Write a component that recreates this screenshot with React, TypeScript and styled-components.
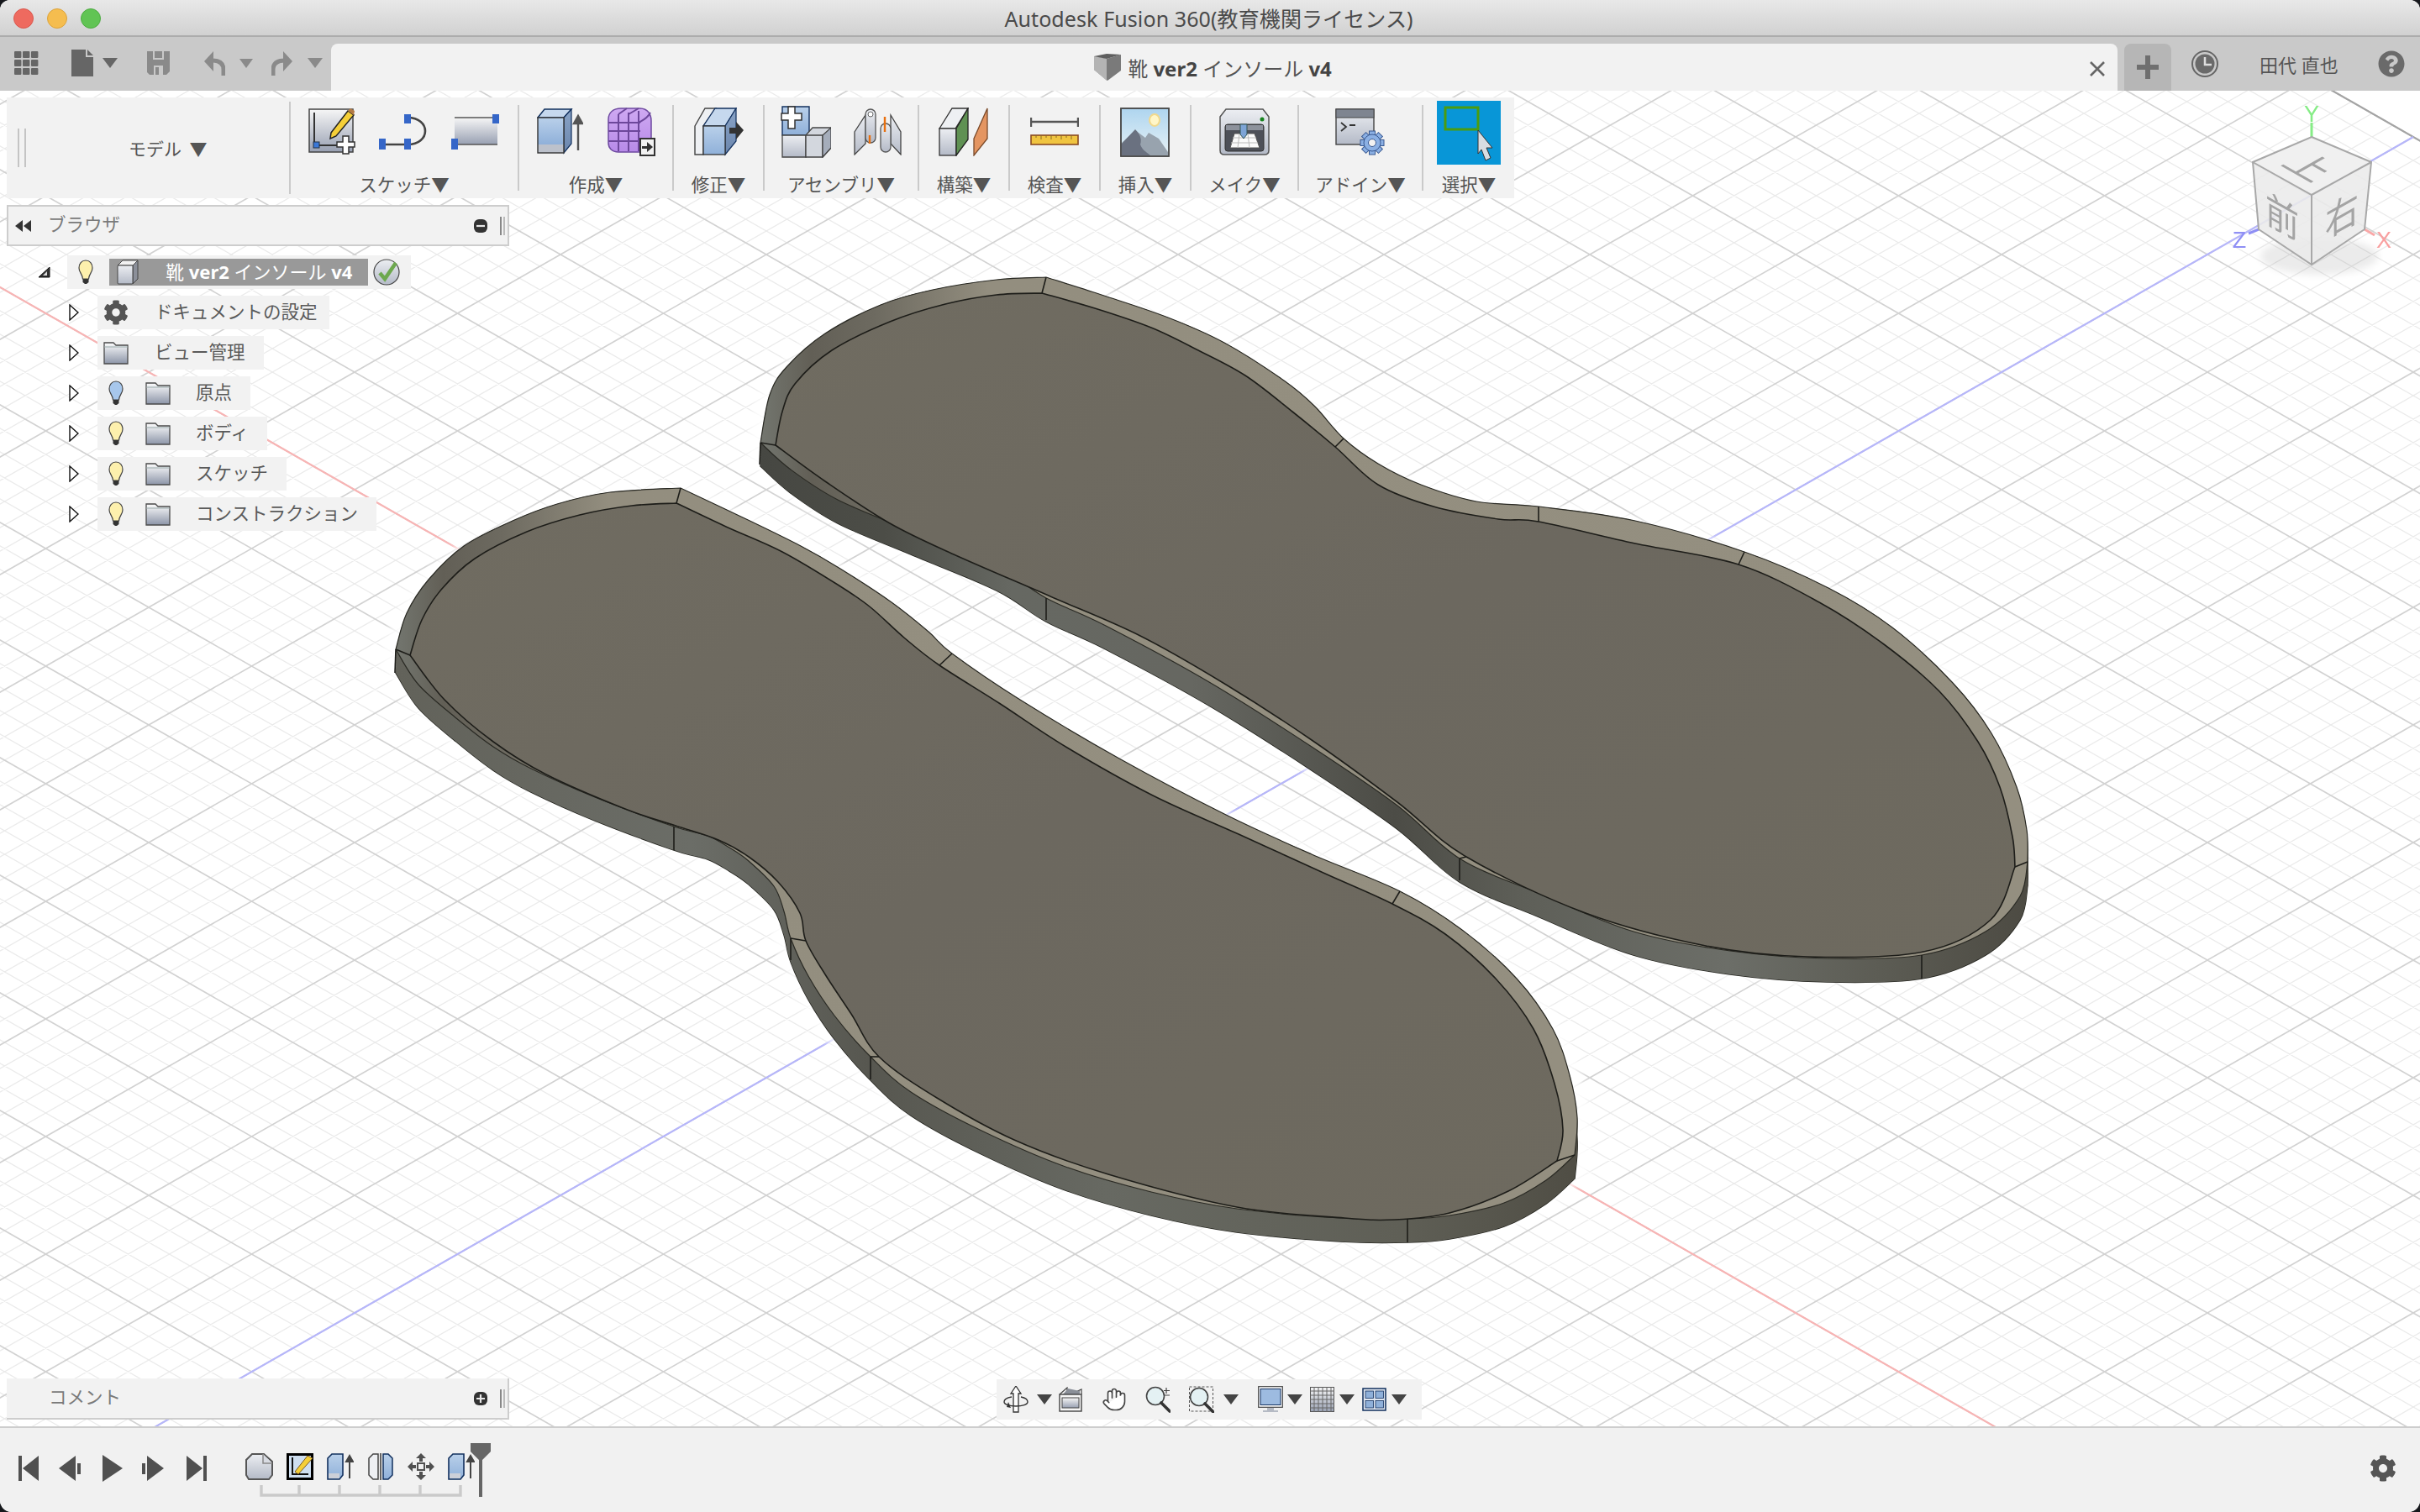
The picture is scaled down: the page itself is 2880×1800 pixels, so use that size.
import React from 'react';
import styled, { createGlobalStyle } from 'styled-components';
import { Hand } from 'lucide-react';
import { FaCog, FaQuestionCircle } from 'react-icons/fa';

const FONT = `"Noto Sans", "Noto Sans CJK JP", sans-serif`;

const Global = createGlobalStyle`
  html, body { margin: 0; padding: 0; background: #16181c; }
  #root { width: 2880px; height: 1800px; overflow: hidden; }
  * { box-sizing: border-box; }
`;

const Win = styled.div`
  width: 2880px; height: 1800px; display: flex; flex-direction: column;
  border-radius: 12px 12px 14px 14px; overflow: hidden; background: #fff;
  font-family: ${FONT}; color: #555;
`;
const TitleBar = styled.div`
  height: 44px; flex: none; display: grid; grid-template-columns: 1fr auto 1fr; align-items: center;
  background: linear-gradient(#e8e8e8, #d1d1d1); border-bottom: 2px solid #acacac;
`;
const Lights = styled.div`display: flex; gap: 16px; padding-left: 16px;`;
const Light = styled.span<{ $c: string; $b: string }>`
  width: 24px; height: 24px; border-radius: 50%; background: ${p => p.$c}; border: 1px solid ${p => p.$b};
`;
const WinTitle = styled.div`font-size: 25px; line-height: 44px; color: #4a4a4a; white-space: nowrap; letter-spacing: .1px; margin-left: -3px;`;

const TabBar = styled.div`
  height: 64px; flex: none; display: flex; background: #c9c9c9;
`;
const LeftTools = styled.div`width: 394px; flex: none; display: flex; align-items: center; height: 62px; padding-top: 0;`;
const Tab = styled.div`
  width: 2126px; flex: none; margin-top: 8px; height: 56px; background: #f2f2f2; border-radius: 8px 8px 0 0;
  display: flex; align-items: center; justify-content: center; position: relative; font-size: 24px; color: #555; gap: 8px; padding-right: 28px;
  b { font-weight: 700; color: #444; }
`;
const TabClose = styled.svg`position: absolute; right: 14px; top: 20px;`;
const PlusTab = styled.div`
  width: 56px; flex: none; margin: 8px 0 0 8px; height: 56px; background: #b6b6b6; border-radius: 8px 8px 0 0;
  display: flex; align-items: center; justify-content: center;
`;
const RightTools = styled.div`flex: 1; display: flex; align-items: center; height: 64px; padding-bottom: 0;`;
const UserName = styled.div`font-size: 22px; color: #555; margin-left: 49px; white-space: nowrap;`;

const Viewport = styled.div`flex: 1; position: relative; background: #fff; min-height: 0;`;
const Canvas = styled.svg`position: absolute; inset: 0; display: block;`;
const Overlay = styled.div`
  position: absolute; inset: 0; display: flex; flex-direction: column; padding: 8px 0 8px 8px;
`;

const Toolbar = styled.div`
  width: 1794px; height: 120px; flex: none; background: #f2f2f2; display: flex; align-items: flex-start; padding-top: 9px;
`;
const ModelSection = styled.div`
  width: 336px; flex: none; height: 102px; display: flex; align-items: center;
`;
const Grip = styled.div`
  width: 10px; height: 46px; border-left: 2px solid #c4c4c4; border-right: 2px solid #c4c4c4; margin-left: 13px; flex: none;
`;
const ModelLabel = styled.div`font-size: 21px; margin-left: 122px; color: #555; white-space: nowrap; word-spacing: 4px;`;
const ToolGroup = styled.div<{ $w: number; $tall?: boolean }>`
  width: ${p => p.$w}px; flex: none; height: ${p => p.$tall ? 110 : 102}px;
  margin-top: ${p => p.$tall ? -4 : 0}px; padding-top: ${p => p.$tall ? 4 : 0}px;
  border-left: 2px solid #cacaca; display: flex; flex-direction: column; align-items: center;
`;
const ToolIcons = styled.div<{ $gap?: number }>`
  display: flex; height: 58px; margin-top: 3px; align-items: center; gap: ${p => p.$gap ?? 0}px; flex: none;
`;
const ToolLabel = styled.div`font-size: 21.5px; line-height: 30px; margin-top: 19px; color: #555; white-space: nowrap; flex: none;`;
const SelectBox = styled.div`
  width: 76px; height: 76px; background: #0896d7; flex: none; margin-top: 1px; display: flex;
`;

const PanelBar = styled.div<{ $open?: boolean }>`
  width: 598px; height: 49px; flex: none; background: #f2f2f2; display: flex; align-items: center;
  border-bottom: 2px solid #cdcdcd; border-right: 2px solid #cdcdcd;
  ${p => p.$open ? 'border-top: 2px solid #cdcdcd; border-left: 2px solid #cdcdcd;' : ''}
  margin-top: ${p => p.$open ? 8 : 0}px;
`;
const PanelTitle = styled.div<{ $open?: boolean }>`
  font-size: 21.5px; color: #7a7a7a; margin-left: ${p => p.$open ? 19 : 50}px; flex: 1; line-height: 1; margin-top: -4px;
`;
const PanelGrip = styled.div`
  width: 6px; height: 22px; border-left: 2px solid #888; border-right: 2px solid #bbb; margin: 0 3px 0 15px; flex: none;
`;

const Tree = styled.div`display: flex; flex-direction: column; gap: 8px; margin-top: 11px;`;
const TreeRow = styled.div<{ $root?: boolean }>`
  display: flex; align-items: center; height: 40px; padding-left: ${p => p.$root ? 37 : 74}px;
`;
const Pill = styled.div<{ $root?: boolean; $tight?: boolean }>`
  height: 40px; background: #f2f2f2; display: flex; align-items: center; flex: none;
  margin-left: ${p => p.$root ? 20 : 22}px; padding-right: ${p => p.$root ? 13 : p.$tight ? 14 : 22}px;
`;
const BulbSlot = styled.div<{ $root?: boolean }>`
  width: 18px; flex: none; margin-left: 13px; margin-right: ${p => p.$root ? 19 : 26}px; display: flex;
`;
const FolderSlot = styled.div<{ $flat?: boolean }>`
  width: 30px; flex: none; margin-left: ${p => p.$flat ? 7 : 0}px; margin-right: ${p => p.$flat ? 31 : 30}px; display: flex;
`;
const RowText = styled.div`font-size: 21.5px; color: #5a5a5a; white-space: nowrap; line-height: 40px; margin-top: -3px;`;
const Selected = styled.div`
  width: 308px; height: 32px; background: #999; color: #fff; display: flex; align-items: center; padding-left: 9px; flex: none;
  font-size: 22px; line-height: 30px; white-space: nowrap; margin-right: 6px;
  b { font-weight: 700; }
  span { margin-left: 32px; margin-top: -3px; }
`;

const Footer = styled.div`margin-top: auto; display: flex; align-items: flex-end;`;
const NavBar = styled.div`
  width: 506px; height: 48px; background: #f2f2f2; margin-left: 580px; flex: none; display: flex; align-items: center;
`;

const Timeline = styled.div`
  height: 102px; flex: none; background: #f1f1f1; border-top: 2px solid #cdcdcd; display: flex; align-items: flex-start;
`;
const Transport = styled.div`display: flex; align-items: center; height: 30px; margin-top: 33px; flex: none;`;
const Strip = styled.div`position: relative; margin-left: 46px; margin-top: 30px; width: 272px; flex: none;`;
const Features = styled.div`display: flex; gap: 16px; height: 32px;`;
const Marker = styled.svg`position: absolute; left: 268px; top: -12px;`;
const Bracket = styled.svg`display: block; margin: 6px 0 0 17px;`;
const GearSlot = styled.div`margin-left: auto; margin-right: 28px; margin-top: 32px; display: flex; color: #555;`;

const Caret = styled.span<{ $c?: string; $ml?: number; $w?: number }>`
  flex: none; width: 0; height: 0; margin-left: ${p => p.$ml ?? 0}px;
  border-left: ${p => (p.$w ?? 18) / 2}px solid transparent; border-right: ${p => (p.$w ?? 18) / 2}px solid transparent;
  border-top: ${p => Math.round((p.$w ?? 18) * 0.68)}px solid ${p => p.$c ?? '#444'};
`;
const Ico = styled.svg<{ $ml?: number }>`display: block; flex: none; margin-left: ${p => p.$ml ?? 0}px;`;
const Defs = styled.svg`position: absolute; width: 0; height: 0;`;
const LucideHand = styled(Hand)`flex: none; margin-left: 23px;`;
const HelpIcon = styled(FaQuestionCircle)`flex: none; margin-left: 47px; color: #6a6a6a;`;

const Svg: React.FC<{ w: number; h: number; ml?: number; children: React.ReactNode }> = ({ w, h, ml, children }) => (
  <Ico $ml={ml} width={w} height={h} viewBox={`0 0 ${w} ${h}`}>{children}</Ico>
);

/* ---------- scene geometry ---------- */
type P = number[];
const spline = (pts: P[], move: boolean) => {
  let d = move ? `M${pts[0][0]} ${pts[0][1]}` : '';
  for (let i = 0; i < pts.length - 1; i++) {
    const a = pts[Math.max(i - 1, 0)], b = pts[i], c = pts[i + 1], e = pts[Math.min(i + 2, pts.length - 1)];
    d += `C${(b[0] + (c[0] - a[0]) / 6).toFixed(1)} ${(b[1] + (c[1] - a[1]) / 6).toFixed(1)} ${(c[0] - (e[0] - b[0]) / 6).toFixed(1)} ${(c[1] - (e[1] - b[1]) / 6).toFixed(1)} ${c[0]} ${c[1]}`;
  }
  return d;
};
const shape = (s: P[][]) => s.map((x, i) => spline(x, i === 0)).join('') + 'Z';

const lowerO = shape([
  [[810,581],[726,586],[663,600],[610,620],[552,650],[510,690],[484,730],[471,773]],
  [[471,773],[498,815],[543,855],[587,889],[632,915],[708,949],[802,984],[842,995],[868,1009],[891,1025],[921,1055],[933,1085],[941,1117],[962,1162],[993,1209],[1036,1258],[1084,1300],[1166,1345],[1268,1389],[1370,1419],[1472,1439],[1595,1450],[1675,1451],[1725,1447],[1790,1432],[1840,1405],[1874,1375]],
  [[1874,1375],[1877,1330],[1868,1280],[1848,1225],[1805,1165],[1740,1107],[1666,1061],[1561,1017],[1459,970],[1332,903],[1214,833],[1133,778],[1105,752],[1061,717],[1000,677],[953,650],[886,617],[810,581]],
]);
const lowerF = shape([
  [[805,599],[752,602],[690,613],[627,633],[565,665],[525,702],[502,738],[488,780]],
  [[488,780],[529,833],[587,883],[650,922],[744,963],[804,983],[855,1000],[891,1020],[926,1050],[952,1087],[959,1120],[982,1160],[1013,1207],[1046,1258],[1115,1307],[1207,1357],[1319,1398],[1472,1437],[1600,1450],[1660,1452],[1725,1444],[1795,1418],[1853,1382]],
  [[1853,1382],[1860,1345],[1850,1290],[1825,1225],[1780,1165],[1720,1112],[1657,1076],[1577,1040],[1474,993],[1372,947],[1270,890],[1189,837],[1118,792],[1077,760],[1036,723],[1000,698],[931,657],[864,627],[805,599]],
]);
const upperO = shape([
  [[1245,330],[1186,333],[1110,345],[1048,363],[982,397],[936,437],[916,470],[905,527]],
  [[905,527],[941,559],[997,595],[1084,632],[1186,675],[1245,712],[1316,745],[1439,812],[1561,889],[1663,959],[1737,1022],[1830,1063],[1944,1109],[2059,1132],[2174,1141],[2287,1137],[2363,1109],[2404,1067],[2413,1026]],
  [[2413,1026],[2412,988],[2400,937],[2370,873],[2324,813],[2252,747],[2176,700],[2076,657],[1946,620],[1831,603],[1757,597],[1691,577],[1640,552],[1599,522],[1564,483],[1528,453],[1457,408],[1390,378],[1314,352],[1245,330]],
]);
const upperF = shape([
  [[1240,349],[1186,351],[1125,362],[1059,383],[990,417],[946,457],[931,490],[923,530]],
  [[923,530],[982,573],[1059,623],[1135,660],[1250,710],[1357,757],[1459,815],[1561,881],[1663,955],[1745,1020],[1887,1087],[2030,1126],[2151,1139],[2289,1133],[2369,1095],[2398,1032]],
  [[2398,1032],[2395,996],[2380,937],[2354,883],[2308,823],[2242,767],[2165,717],[2069,672],[1946,647],[1831,621],[1783,618],[1706,603],[1640,577],[1589,532],[1538,490],[1482,447],[1426,417],[1370,390],[1303,367],[1240,349]],
]);
const lowerSeams = [[810,581,805,599],[471,773,488,780],[471,773,470,801],[802,984,802,1012],[941,1117,959,1120],[941,1117,941,1143],[1036,1258,1046,1258],[1036,1258,1036,1285],[1675,1451,1675,1479],[1133,778,1118,792],[1666,1061,1657,1076],[1874,1375,1853,1382]];
const upperSeams = [[1245,330,1240,349],[905,527,923,530],[905,527,904,553],[1245,712,1245,738],[1737,1022,1745,1020],[1737,1022,1737,1048],[2287,1137,2287,1165],[2413,1026,2398,1032],[1599,522,1589,532],[1831,603,1831,621],[2076,657,2069,672]];

const OX = 1279.5, OY = 1073, UX = 122.5, UY = 70;
const pt = (a: number, b: number) => `${(OX + UX * (a + b)).toFixed(1)} ${(OY + UY * (a - b)).toFixed(1)}`;
const gridPaths = (() => {
  let major = '', minor = '';
  for (let i = -65; i <= 65; i++) {
    const v = i / 5;
    const seg = `M${pt(v, -13)}L${pt(v, 13)}M${pt(-13, v)}L${pt(13, v)}`;
    if (i % 5 === 0) major += seg; else minor += seg;
  }
  return { major, minor };
})();

const Sweep: React.FC<{ d: string; grad: string }> = ({ d, grad }) => (
  <g fill={`url(#${grad})`}>
    {Array.from({ length: 15 }, (_, i) => <path key={i} d={d} transform={`translate(0 ${i * 2})`} />)}
  </g>
);

const Shoe: React.FC<{ o: string; f: string; side: string; seams: number[][] }> = ({ o, f, side, seams }) => (
  <g>
    <path d={o} transform="translate(0 14)" fill="none" stroke="#fff" strokeWidth="34" opacity=".8" filter="url(#soft)" />
    <path d={o} transform="translate(0 28)" fill="none" stroke="#25251f" strokeWidth="1.6" />
    <Sweep d={o} grad={side} />
    <path d={o} fill="url(#rim)" stroke="#2a2a24" strokeWidth="1.2" />
    <path d={f} fill="url(#floor)" stroke="#1d1d19" strokeWidth="1.6" />
    <g stroke="#1d1d19" strokeWidth="1.6">
      {seams.map((s, i) => <line key={i} x1={s[0]} y1={s[1]} x2={s[2]} y2={s[3]} />)}
    </g>
  </g>
);

const ViewCube = () => (
  <g filter="url(#gridblur)">
    <ellipse cx="2760" cy="305" rx="70" ry="22" fill="#000" opacity=".08" filter="url(#soft)" />
    <line x1="2751" y1="146" x2="2751" y2="163" stroke="#86ec86" strokeWidth="3" />
    <line x1="2688" y1="273" x2="2676" y2="278" stroke="#8f8ff5" strokeWidth="3" />
    <line x1="2814" y1="273" x2="2826" y2="280" stroke="#f9a8a8" strokeWidth="3" />
    <text x="2751" y="145" fill="#86ec86" fontSize="27" textAnchor="middle" fontFamily="Liberation Sans">Y</text>
    <text x="2665" y="295" fill="#8f8ff5" fontSize="27" textAnchor="middle" fontFamily="Liberation Sans">Z</text>
    <text x="2837" y="295" fill="#f9a0a0" fontSize="27" textAnchor="middle" fontFamily="Liberation Sans">X</text>
    <path d="M2751 163L2822 193L2814 273L2751 315L2688 273L2681 193Z" fill="#ebebeb" opacity=".88" />
    <path d="M2751 163L2822 193L2751 232L2681 193Z" fill="#f1f1f1" opacity=".9" />
    <g fill="none" stroke="#a8a8a8" strokeWidth="2">
      <path d="M2751 163L2822 193L2814 273L2751 315L2688 273L2681 193Z" />
      <path d="M2681 193L2751 232L2822 193M2751 232V315" />
    </g>
    <g fill="#a4a4a4" fontSize="46" textAnchor="middle" dominantBaseline="central" fontFamily="Noto Sans CJK JP">
      <text transform="matrix(.87 .49 -.87 .49 2751 197)">上</text>
      <text transform="matrix(.87 .49 0 1 2716 255)">前</text>
      <text transform="matrix(.87 -.49 0 1 2787 253)">右</text>
    </g>
  </g>
);

const Scene = () => (
  <Canvas width="2880" height="1590" viewBox="0 108 2880 1590">
    <defs>
      <filter id="soft" x="-20%" y="-20%" width="140%" height="140%"><feGaussianBlur stdDeviation="5" /></filter>
      <filter id="gridblur"><feGaussianBlur stdDeviation=".5" /></filter>
      <linearGradient id="rim" x1="0" x2="1" y1="0" y2="0">
        <stop offset="0" stopColor="#73766f" /><stop offset=".04" stopColor="#625f56" />
        <stop offset=".09" stopColor="#6d6a60" /><stop offset=".18" stopColor="#938e7f" />
        <stop offset="1" stopColor="#948f80" />
      </linearGradient>
      <linearGradient id="floor" x1="0" x2="1" y1="0" y2="1">
        <stop offset="0" stopColor="#706c61" /><stop offset=".5" stopColor="#6c685f" /><stop offset="1" stopColor="#6e6a5f" />
      </linearGradient>
      <linearGradient id="sideU" gradientUnits="userSpaceOnUse" x1="900" x2="2420" y1="0" y2="0">
        <stop offset="0" stopColor="#464742" /><stop offset=".1" stopColor="#4c4d47" /><stop offset=".2" stopColor="#666862" />
        <stop offset=".34" stopColor="#666761" /><stop offset=".5" stopColor="#4c4c46" /><stop offset=".6" stopColor="#5e5f58" />
        <stop offset=".76" stopColor="#6c6e68" /><stop offset=".88" stopColor="#5c5c54" /><stop offset="1" stopColor="#4c4a42" />
      </linearGradient>
      <linearGradient id="sideL" gradientUnits="userSpaceOnUse" x1="470" x2="1880" y1="0" y2="0">
        <stop offset="0" stopColor="#62625a" /><stop offset=".25" stopColor="#6b6d67" /><stop offset=".4" stopColor="#575750" />
        <stop offset=".6" stopColor="#676962" /><stop offset=".85" stopColor="#5f5f56" /><stop offset="1" stopColor="#4f4d44" />
      </linearGradient>
    </defs>
    <rect x="0" y="108" width="2880" height="1590" fill="#fff" />
    <g filter="url(#gridblur)" fill="none">
      <path d={gridPaths.minor} stroke="#ebebeb" strokeWidth="1.3" />
      <path d={gridPaths.major} stroke="#d2d2d2" strokeWidth="1.7" />
      <path d={`M${pt(-13, 13)}L${pt(13, 13)}`} stroke="#a4a4a4" strokeWidth="2.2" />
      <path d={`M${pt(-13, 0)}L${pt(13, 0)}`} stroke="#f8b4b4" strokeWidth="2.2" />
      <path d={`M${pt(0, -13)}L${pt(0, 13)}`} stroke="#b6b6fa" strokeWidth="2.2" />
    </g>
    <Shoe o={upperO} f={upperF} side="sideU" seams={upperSeams} />
    <Shoe o={lowerO} f={lowerF} side="sideL" seams={lowerSeams} />
    <ViewCube />
  </Canvas>
);

/* ---------- shared gradients ---------- */
const SharedDefs = () => (
  <Defs>
    <defs>
      <linearGradient id="gSteel" x1="0" x2="0" y1="0" y2="1"><stop offset="0" stopColor="#f6f6f6" /><stop offset="1" stopColor="#98a0b2" /></linearGradient>
      <linearGradient id="gBlue" x1="0" x2="0" y1="0" y2="1"><stop offset="0" stopColor="#b9d0ea" /><stop offset="1" stopColor="#8fb0d9" /></linearGradient>
      <linearGradient id="gBlueDark" x1="0" x2="0" y1="0" y2="1"><stop offset="0" stopColor="#8aa4c7" /><stop offset="1" stopColor="#6b86ad" /></linearGradient>
      <linearGradient id="gPale" x1="0" x2="0" y1="0" y2="1"><stop offset="0" stopColor="#eceef2" /><stop offset="1" stopColor="#b4bac7" /></linearGradient>
      <linearGradient id="gFolder" x1="0" x2="0" y1="0" y2="1"><stop offset="0" stopColor="#fdfdfd" /><stop offset="1" stopColor="#8c95a8" /></linearGradient>
      <linearGradient id="gSky" x1="0" x2="0" y1="0" y2="1"><stop offset="0" stopColor="#aed5ef" /><stop offset="1" stopColor="#e8f2f6" /></linearGradient>
      <linearGradient id="gPurple" x1="0" x2="0" y1="0" y2="1"><stop offset="0" stopColor="#cfa9f2" /><stop offset="1" stopColor="#b78ae8" /></linearGradient>
    </defs>
  </Defs>
);

/* ---------- icons ---------- */
const Handle = ({ x, y, s = 8 }: { x: number; y: number; s?: number }) => <rect x={x - s / 2} y={y - s / 1.0 + s / 2 - 3} width={s} height={s + 6} fill="#3566c8" />;

const SketchIco = () => (
  <Svg w={56} h={56}>
    <rect x="1" y="1" width="52" height="51" fill="url(#gSteel)" stroke="#444" strokeWidth="1.5" />
    <path d="M7 5V44H44" fill="none" stroke="#333" strokeWidth="2" />
    <rect x="6" y="40" width="7" height="7" fill="#3a78d8" stroke="#234" strokeWidth="1" />
    <path d="M27 29L47 3L54 8L33 33L26 36Z" fill="#f5cf38" stroke="#222" strokeWidth="1.5" />
    <path d="M47 3L54 8L55 3L50 0Z" fill="#b37a44" />
    <path d="M41 33H48V40H55V46H48V54H41V46H34V40H41Z" fill="#fff" stroke="#333" strokeWidth="1.5" />
  </Svg>
);
const ArcIco = () => (
  <Svg w={58} h={42}>
    <path d="M4 36H34M34 4C62 4 62 36 34 36" fill="none" stroke="#444" strokeWidth="2.6" />
    <Handle x={4} y={36} /><Handle x={34} y={36} /><Handle x={34} y={4} />
  </Svg>
);
const RectIco = () => (
  <Svg w={58} h={42}>
    <rect x="4" y="4" width="51" height="32" fill="url(#gSteel)" />
    <path d="M4 4H54M4 36H55" stroke="#555" strokeWidth="1.6" />
    <Handle x={4} y={36} /><Handle x={53} y={4} />
  </Svg>
);
const ExtrudeIco = () => (
  <Svg w={55} h={56}>
    <path d="M1 11L9 1H41L32 11Z" fill="#c6d8ee" stroke="#12305e" strokeWidth="1.5" />
    <path d="M32 11L41 1V42L32 53Z" fill="url(#gBlueDark)" stroke="#12305e" strokeWidth="1.2" />
    <rect x="1" y="11" width="31" height="32" fill="url(#gBlue)" />
    <rect x="1" y="43" width="31" height="10" fill="#bcc1cb" />
    <rect x="1" y="11" width="31" height="42" fill="none" stroke="#333" strokeWidth="1.4" />
    <path d="M49 50V14M44 18L49 9L54 18Z" stroke="#555" strokeWidth="2.4" fill="#555" />
  </Svg>
);
const FormIco = () => (
  <Svg w={58} h={58}>
    <path d="M2 14C2 6 8 1 17 1H39C49 1 53 8 53 16V42C53 50 46 53 40 53H14C6 53 2 48 2 42Z" fill="url(#gPurple)" stroke="#6e4aa0" strokeWidth="1.5" />
    <path d="M2 18H40M2 28H40M2 40H50M14 8V52M26 6V52M38 4V52M38 18C46 14 50 10 52 6M14 8L24 1M26 8L38 1" stroke="#6d479b" strokeWidth="2" fill="none" />
    <rect x="40" y="37" width="17" height="20" fill="#f2f2f2" stroke="#333" strokeWidth="2" />
    <path d="M42 46H48V41L55 47L48 53V49H42Z" fill="#333" />
  </Svg>
);
const ModifyIco = () => (
  <Svg w={59} h={58}>
    <path d="M1 22L13 1H26L11 22V56H1Z" fill="#eef0f3" stroke="#444" strokeWidth="1.4" />
    <path d="M11 22L25 1H50L37 22Z" fill="#c6d8ee" stroke="#12305e" strokeWidth="1.3" />
    <path d="M37 22L50 1V40L37 56Z" fill="url(#gBlueDark)" stroke="#12305e" strokeWidth="1.2" />
    <rect x="11" y="22" width="26" height="34" fill="url(#gBlue)" stroke="#333" strokeWidth="1.3" />
    <path d="M42 24H50V17L59 27L50 38V31H42Z" fill="#333" />
  </Svg>
);
const NewCompIco = () => (
  <Svg w={60} h={62}>
    <path d="M2 1H34V35H2Z" fill="url(#gBlue)" stroke="#12305e" strokeWidth="1.4" />
    <path d="M2 35H30V61H2Z" fill="url(#gPale)" stroke="#444" strokeWidth="1.3" />
    <path d="M30 35L38 26H60V50L50 61H30Z" fill="#d3d7de" stroke="#444" strokeWidth="1.3" />
    <path d="M30 35H50V61" fill="none" stroke="#444" strokeWidth="1.3" />
    <path d="M50 35L60 26V50L50 61Z" fill="#a5adbb" stroke="#444" strokeWidth="1.3" />
    <path d="M6 0H14V8H22V16H14V26H6V16H-2V8H6Z" transform="translate(3 1)" fill="#fff" stroke="#333" strokeWidth="1.5" />
  </Svg>
);
const JointIco = () => (
  <Svg w={58} h={56}>
    <path d="M1 28L14 8V42L1 55Z" fill="url(#gPale)" stroke="#444" strokeWidth="1.3" />
    <rect x="14" y="1" width="12" height="40" rx="6" fill="url(#gPale)" stroke="#555" strokeWidth="1.3" />
    <circle cx="20" cy="7" r="3" fill="#fff" stroke="#666" />
    <path d="M44 8L56 28V55L44 42Z" fill="url(#gPale)" stroke="#444" strokeWidth="1.3" />
    <rect x="32" y="18" width="12" height="34" rx="6" fill="url(#gPale)" stroke="#555" strokeWidth="1.3" />
    <path d="M37 10V28M19 32V42" stroke="#e8700f" strokeWidth="2.4" />
  </Svg>
);
const PlaneIco = () => (
  <Svg w={60} h={58}>
    <path d="M1 25L16 1H35L20 25Z" fill="#eef0f3" stroke="#333" strokeWidth="1.3" />
    <rect x="1" y="25" width="20" height="32" fill="url(#gPale)" stroke="#333" strokeWidth="1.3" />
    <path d="M21 25L35 1V38L21 57Z" fill="#5f9153" stroke="#222" strokeWidth="1.3" />
    <path d="M42 37L58 1V37L42 57Z" fill="#e49561" stroke="#7a4a2a" strokeWidth="1.3" />
  </Svg>
);
const MeasureIco = () => (
  <Svg w={58} h={34}>
    <path d="M1 0V11M57 0V11M1 5H57" stroke="#555" strokeWidth="2.4" />
    <rect x="1" y="21" width="56" height="11" fill="#f0c440" stroke="#8a4a22" strokeWidth="1.6" />
    <path d="M7 21v3M13 21v5M19 21v3M25 21v5M31 21v3M37 21v5M43 21v3M49 21v5" stroke="#8a6a22" strokeWidth="1" />
  </Svg>
);
const PictureIco = () => (
  <Svg w={60} h={59}>
    <rect x="1" y="1" width="57" height="57" fill="url(#gSky)" stroke="#4a4a4a" strokeWidth="1.5" />
    <ellipse cx="41" cy="15" rx="6" ry="7" fill="#fff6c8" stroke="#f2d98c" strokeWidth="2" />
    <path d="M2 57V42L18 27L30 36L34 30L46 37L57 53V57Z" fill="#98a3ae" />
    <path d="M2 57V43L18 26C24 32 26 38 24 44C26 50 30 52 36 57Z" fill="#6a7180" />
    <rect x="1" y="1" width="57" height="57" fill="none" stroke="#4a4a4a" strokeWidth="1.5" />
  </Svg>
);
const PrinterIco = () => (
  <Svg w={60} h={56}>
    <path d="M1 10L8 1H52L59 10V50C59 53 57 55 54 55H6C3 55 1 53 1 50Z" fill="url(#gPale)" stroke="#555" strokeWidth="1.5" />
    <rect x="7" y="19" width="46" height="32" rx="3" fill="#4d5058" stroke="#333" />
    <rect x="8" y="20" width="44" height="6" fill="#8d929c" />
    <path d="M13 47L18 30H42L48 47Z" fill="#fbfbfb" stroke="#555" />
    <path d="M14 41H46M16 35H44M24 30L22 47M34 30L36 47" stroke="#bbb" strokeWidth="1" />
    <path d="M25 19H33V31L29 36L25 31Z" fill="#7da4d6" stroke="#355" strokeWidth="1" />
    <circle cx="51" cy="13" r="2.5" fill="#17841f" />
  </Svg>
);
const AddinIco = () => {
  const teeth = Array.from({ length: 8 }, (_, i) => i * 45);
  return (
    <Svg w={60} h={56}>
      <rect x="1" y="1" width="45" height="42" fill="url(#gPale)" stroke="#444" strokeWidth="1.4" />
      <rect x="1" y="1" width="45" height="10" fill="#7f8590" stroke="#444" strokeWidth="1" />
      <path d="M7 17L13 22L7 27" fill="none" stroke="#333" strokeWidth="1.8" /><path d="M17 20H24" stroke="#333" strokeWidth="2" />
      <g transform="translate(44 41)">
        {teeth.map(t => <rect key={t} x="-3.5" y="-14" width="7" height="7" fill="#8bb0e4" stroke="#3a5a92" strokeWidth="1" transform={`rotate(${t})`} />)}
        <circle r="10" fill="#8bb0e4" stroke="#3a5a92" strokeWidth="1" /><circle r="4.5" fill="#f2f2f2" stroke="#3a5a92" strokeWidth="1" />
      </g>
    </Svg>
  );
};
const SelectIco = () => (
  <Svg w={76} h={76}>
    <rect x="10" y="8" width="39" height="26" fill="none" stroke="#4b9c0f" strokeWidth="3" />
    <path d="M49 35L66 56L59 56L64 68L58 71L53 58L49 63Z" fill="#d8dde2" stroke="#333" strokeWidth="1" />
  </Svg>
);

const GridIco = () => (
  <Svg w={29} h={28}>
    <g fill="#666">{[0, 10, 20].flatMap(y => [0, 10, 20].map(x => <rect key={`${x}${y}`} x={x} y={y} width="8.4" height="8" rx="1" />))}</g>
  </Svg>
);
const DocIco = () => <Svg w={26} h={32} ml={39}><path d="M0 0H17V9H26V32H0ZM19 0L26 7H19Z" fill="#666" /></Svg>;
const SaveIco = () => (
  <Svg w={27} h={28} ml={35}>
    <path d="M0 0H27V24L23 28H3L0 25Z" fill="#8a8a8a" />
    <path d="M7 0H20V10H7ZM8 17H19V28H8Z" fill="#c9c9c9" />
    <path d="M10 19H14V28H10Z" fill="#8a8a8a" />
    <path d="M9 0H18V8H9Z" fill="#8a8a8a" />
  </Svg>
);
const UndoIco = ({ flip, ml }: { flip?: boolean; ml: number }) => (
  <Svg w={26} h={30} ml={ml}>
    <g transform={flip ? 'translate(26 0) scale(-1 1)' : undefined}>
      <path d="M24 30V23C24 15 18 12 10 12" fill="none" stroke="#8a8a8a" strokeWidth="5" />
      <path d="M12 1L1 13L12 25Z" fill="#8a8a8a" />
    </g>
  </Svg>
);
const ClockIco = () => (
  <Svg w={32} h={32} ml={24}>
    <circle cx="16" cy="16" r="15" fill="none" stroke="#666" strokeWidth="2" />
    <circle cx="16" cy="16" r="11.5" fill="#6a6a6a" />
    <path d="M16 8V17H24" fill="none" stroke="#ddd" strokeWidth="2.5" />
  </Svg>
);
const BodyIco = () => (
  <Svg w={33} h={32}>
    <path d="M4 31L1 26V8L8 1H22L32 10V26L28 31Z" fill="url(#gPale)" stroke="#555" strokeWidth="2" />
    <path d="M21 1V12H32" fill="#d8dbe2" stroke="#888" strokeWidth="1.5" />
  </Svg>
);
const CubeDoc = () => (
  <Svg w={33} h={32}>
    <path d="M16 6L33 1V20L17 32L1 19V3Z" fill="#7a7a7a" />
    <path d="M1 3L16 6V32L1 19Z" fill="#b4b4b4" />
    <path d="M1 3L16 0L33 1L16 6Z" fill="#5f5f5f" />
  </Svg>
);
const RootCube = () => (
  <Svg w={26} h={30}>
    <path d="M1 7L7 1H25L19 7Z" fill="#f2f2f2" stroke="#444" strokeWidth="1" />
    <path d="M19 7L25 1V23L19 29Z" fill="#8b8f99" stroke="#444" strokeWidth="1" />
    <rect x="1" y="7" width="18" height="22" rx="1" fill="url(#gPale)" stroke="#444" strokeWidth="1" />
  </Svg>
);
const Folder = () => (
  <Svg w={30} h={27}>
    <path d="M1 1H12L15 4H29V26H1Z" fill="url(#gFolder)" stroke="#4a4a4a" strokeWidth="1.3" />
    <path d="M1 6H29" stroke="#9aa" strokeWidth="1" />
  </Svg>
);
const Bulb = ({ on = true }: { on?: boolean }) => (
  <Svg w={18} h={30}>
    <path d="M9 1C4 1 1 5 1 10C1 15 5 17 5.5 23H12.500C13 17 17 15 17 10C17 5 14 1 9 1Z" fill={on ? '#fdf0ad' : '#a7c7ec'} stroke="#444" strokeWidth="1.2" />
    <path d="M5.500 23H12.500V27L10 29H8L5.500 27Z" fill="#333" />
  </Svg>
);
const CheckBadge = () => (
  <Svg w={32} h={32}>
    <circle cx="16" cy="16" r="15" fill="url(#gPale)" stroke="#444" strokeWidth="1.2" />
    <path d="M8 17L14 24L27 5" fill="none" stroke="#6da84e" strokeWidth="4.5" />
  </Svg>
);
const Expand = () => (
  <Svg w={12} h={20}><path d="M1 1L11 10L1 19Z" fill="#fff" stroke="#111" strokeWidth="1.4" /></Svg>
);
const Collapse = () => (
  <Svg w={15} h={14}><path d="M14 1V13H1Z" fill="#333" stroke="#111" /><path d="M11 6V11H6Z" fill="#ddd" /></Svg>
);

const Rewind = () => <Svg w={20} h={14} ml={8}><path d="M9 0V14L0 7ZM19 0V14L10 7Z" fill="#333" /></Svg>;
const PanelBtn = ({ plus }: { plus?: boolean }) => (
  <Svg w={16} h={16}>
    <rect width="16" height="16" rx="6" fill="#333" />
    <path d={plus ? 'M3 8H13M8 3V13' : 'M3 8H13'} stroke="#e8e8e8" strokeWidth="2.2" />
  </Svg>
);

const First = () => <Svg w={24} h={30} ml={22}><path d="M0 0H4V30H0ZM24 0V30L5 15Z" fill="#505050" /></Svg>;
const Prev = () => <Svg w={26} h={30} ml={24}><path d="M20 0V30L0 15ZM22 9H26V22H22Z" fill="#505050" /></Svg>;
const Play = () => <Svg w={24} h={32} ml={26}><path d="M0 0L24 16L0 32Z" fill="#505050" /></Svg>;
const Next = () => <Svg w={26} h={30} ml={23}><path d="M6 0V30L26 15ZM0 9H4V22H0Z" fill="#505050" /></Svg>;
const Last = () => <Svg w={24} h={30} ml={27}><path d="M20 0H24V30H20ZM0 0V30L19 15Z" fill="#505050" /></Svg>;

const TlSketch = () => (
  <Svg w={32} h={32}>
    <rect x="1.500" y="1.500" width="29" height="29" fill="#cfdff0" stroke="#000" strokeWidth="3" />
    <path d="M7 5V25H26" fill="none" stroke="#111" strokeWidth="2" />
    <path d="M10 22L25 3L31 6L14 25Z" fill="#f5cf38" stroke="#7a5a22" strokeWidth="1" />
  </Svg>
);
const TlExtrude = () => (
  <Svg w={32} h={32}>
    <path d="M1 6L6 1H19V26L15 31H1Z" fill="url(#gBlue)" stroke="#12305e" strokeWidth="1.6" />
    <rect x="2" y="24" width="13" height="6" fill="#ccd0d8" />
    <path d="M27 30V7M23 10L27 3L31 10Z" stroke="#444" strokeWidth="2" fill="#444" />
  </Svg>
);
const TlMirror = () => (
  <Svg w={32} h={32}>
    <path d="M2 6L7 1H13V31H7L2 26Z" fill="#eef0f3" stroke="#444" strokeWidth="1.5" />
    <path d="M30 6L25 1H19V31H25L30 26Z" fill="url(#gBlue)" stroke="#12305e" strokeWidth="1.5" />
    <path d="M16 0V32" stroke="#333" strokeWidth="1.5" />
  </Svg>
);
const TlMove = () => (
  <Svg w={32} h={32}>
    <g fill="#505050"><path d="M16 0L22 6H10ZM16 32L22 26H10ZM0 16L6 10V22ZM32 16L26 10V22Z" /><path d="M14 6H18V10H14ZM14 22H18V26H14ZM6 14H10V18H6ZM22 14H26V18H22Z" /></g>
    <rect x="12" y="12" width="8" height="8" fill="#f1f1f1" stroke="#505050" strokeWidth="2" />
  </Svg>
);

const OrbitIco = () => (
  <Svg w={30} h={32} ml={8}>
    <path d="M15 0L21 9H18V31H12V9H9Z" fill="#fff" stroke="#333" strokeWidth="1.3" />
    <path d="M10 13C4 14 1 16 1 19C1 22 8 24 15 24C23 24 29 22 29 19C29 16 26 14 21 13" fill="none" stroke="#333" strokeWidth="1.4" />
    <path d="M6 19L9 26L4 25Z" fill="#333" />
  </Svg>
);
const FilmIco = () => (
  <Svg w={28} h={30} ml={8}>
    <path d="M1 9L10 1V9M14 9L27 3V9" fill="none" stroke="#444" strokeWidth="1.2" />
    <path d="M5 9L11 2L25 5V9Z" fill="#8a8f98" />
    <rect x="1" y="9" width="26" height="20" fill="#f5f5f5" stroke="#444" strokeWidth="1.4" />
    <rect x="4" y="13" width="20" height="12" fill="url(#gSteel)" stroke="#444" />
  </Svg>
);
const ZoomIco = () => (
  <Svg w={30} h={32} ml={22}>
    <circle cx="12" cy="12" r="10.500" fill="#e4f1f3" stroke="#444" strokeWidth="1.6" />
    <path d="M19 20L29 30" stroke="#333" strokeWidth="3.6" strokeLinecap="round" />
    <path d="M25 2V9M22 5.500H29M22 11H29" stroke="#444" strokeWidth="1.2" />
  </Svg>
);
const FitIco = () => (
  <Svg w={30} h={32} ml={22}>
    <rect x=".5" y="1" width="28" height="29" fill="none" stroke="#555" strokeDasharray="3 2" />
    <circle cx="12" cy="13" r="10.500" fill="#e4f1f3" stroke="#444" strokeWidth="1.6" />
    <path d="M19 21L29 31" stroke="#333" strokeWidth="3.6" strokeLinecap="round" />
  </Svg>
);
const MonitorIco = () => (
  <Svg w={30} h={32} ml={23}>
    <rect x=".7" y=".7" width="28.600" height="24.600" fill="#fff" stroke="#444" strokeWidth="1.2" />
    <rect x="3" y="3.500" width="24" height="19" fill="#9dbbe0" stroke="#12305e" />
    <path d="M11 26H19V29H24V31H6V29H11Z" fill="#b5bac4" />
  </Svg>
);
const GridDispIco = () => (
  <Svg w={29} h={30} ml={9}>
    <rect x=".5" y=".5" width="28" height="29" fill="url(#gSteel)" stroke="#555" />
    <path d="M5 0V30M10 0V30M15 0V30M20 0V30M25 0V30M0 5H29M0 10H29M0 15H29M0 20H29M0 25H29" stroke="#666" strokeWidth="1" />
  </Svg>
);
const ViewsIco = () => (
  <Svg w={29} h={28} ml={9}>
    <rect x="1" y="1" width="27" height="26" fill="#dfe6f0" stroke="#12305e" strokeWidth="1.5" />
    <g fill="#8fb0d9" stroke="#12305e" strokeWidth=".8">
      <rect x="4" y="4" width="9.500" height="8.500" /><rect x="16" y="4" width="9.500" height="8.500" />
      <rect x="4" y="15.500" width="9.500" height="8.500" /><rect x="16" y="15.500" width="9.500" height="8.500" />
    </g>
  </Svg>
);

const tree = [
  { key: 'origin', text: '原点', on: false },
  { key: 'body', text: 'ボディ', on: true },
  { key: 'sketch', text: 'スケッチ', on: true },
  { key: 'construct', text: 'コンストラクション', on: true },
];

export default function App() {
  return (
    <>
      <Global />
      <SharedDefs />
      <Win>
        <TitleBar>
          <Lights>
            <Light $c="#ee6a5f" $b="#d9594f" /><Light $c="#f5bd4f" $b="#dba33c" /><Light $c="#61c454" $b="#4eab42" />
          </Lights>
          <WinTitle>Autodesk Fusion 360(教育機関ライセンス)</WinTitle>
          <div />
        </TitleBar>
        <TabBar>
          <LeftTools>
            <Svg w={17} h={1}><g /></Svg>
            <GridIco /><DocIco /><Caret $c="#666" $ml={11} />
            <SaveIco /><UndoIco ml={40} /><Caret $c="#8a8a8a" $ml={17} $w={16} />
            <UndoIco ml={22} flip /><Caret $c="#8a8a8a" $ml={17} />
          </LeftTools>
          <Tab>
            <CubeDoc />
            <span>靴 <b>ver2</b> インソール <b>v4</b></span>
            <TabClose width="20" height="20" viewBox="0 0 20 20"><path d="M2 2L18 18M18 2L2 18" stroke="#666" strokeWidth="2.6" /></TabClose>
          </Tab>
          <PlusTab><Svg w={26} h={28}><path d="M10 0H16V11H26V17H16V28H10V17H0V11H10Z" fill="#6f6f6f" /></Svg></PlusTab>
          <RightTools>
            <ClockIco />
            <UserName>田代 直也</UserName>
            <HelpIcon size={32} />
          </RightTools>
        </TabBar>
        <Viewport>
          <Scene />
          <Overlay>
            <Toolbar>
              <ModelSection>
                <Grip />
                <ModelLabel>モデル ▼</ModelLabel>
              </ModelSection>
              <ToolGroup $w={272} $tall>
                <ToolIcons $gap={28}><SketchIco /><ArcIco /><RectIco /></ToolIcons>
                <ToolLabel>スケッチ▼</ToolLabel>
              </ToolGroup>
              <ToolGroup $w={184}>
                <ToolIcons $gap={28}><ExtrudeIco /><FormIco /></ToolIcons>
                <ToolLabel>作成▼</ToolLabel>
              </ToolGroup>
              <ToolGroup $w={108}>
                <ToolIcons><ModifyIco /></ToolIcons>
                <ToolLabel>修正▼</ToolLabel>
              </ToolGroup>
              <ToolGroup $w={184}>
                <ToolIcons $gap={27}><NewCompIco /><JointIco /></ToolIcons>
                <ToolLabel>アセンブリ▼</ToolLabel>
              </ToolGroup>
              <ToolGroup $w={108}>
                <ToolIcons><PlaneIco /></ToolIcons>
                <ToolLabel>構築▼</ToolLabel>
              </ToolGroup>
              <ToolGroup $w={108}>
                <ToolIcons><MeasureIco /></ToolIcons>
                <ToolLabel>検査▼</ToolLabel>
              </ToolGroup>
              <ToolGroup $w={108}>
                <ToolIcons><PictureIco /></ToolIcons>
                <ToolLabel>挿入▼</ToolLabel>
              </ToolGroup>
              <ToolGroup $w={128}>
                <ToolIcons><PrinterIco /></ToolIcons>
                <ToolLabel>メイク▼</ToolLabel>
              </ToolGroup>
              <ToolGroup $w={148}>
                <ToolIcons><AddinIco /></ToolIcons>
                <ToolLabel>アドイン▼</ToolLabel>
              </ToolGroup>
              <ToolGroup $w={110}>
                <ToolIcons><SelectBox><SelectIco /></SelectBox></ToolIcons>
                <ToolLabel>選択▼</ToolLabel>
              </ToolGroup>
            </Toolbar>
            <PanelBar $open>
              <Rewind />
              <PanelTitle $open>ブラウザ</PanelTitle>
              <PanelBtn />
              <PanelGrip />
            </PanelBar>
            <Tree>
              <TreeRow $root>
                <Collapse />
                <Pill $root>
                  <BulbSlot $root><Bulb /></BulbSlot>
                  <Selected><RootCube /><span>靴 <b>ver2</b> インソール <b>v4</b></span></Selected>
                  <CheckBadge />
                </Pill>
              </TreeRow>
              <TreeRow>
                <Expand />
                <Pill $tight>
                  <FolderSlot $flat><FaCog size={32} color="#555" /></FolderSlot>
                  <RowText>ドキュメントの設定</RowText>
                </Pill>
              </TreeRow>
              <TreeRow>
                <Expand />
                <Pill>
                  <FolderSlot $flat><Folder /></FolderSlot>
                  <RowText>ビュー管理</RowText>
                </Pill>
              </TreeRow>
              {tree.map(t => (
                <TreeRow key={t.key}>
                  <Expand />
                  <Pill>
                    <BulbSlot><Bulb on={t.on} /></BulbSlot>
                    <FolderSlot><Folder /></FolderSlot>
                    <RowText>{t.text}</RowText>
                  </Pill>
                </TreeRow>
              ))}
            </Tree>
            <Footer>
              <PanelBar>
                <PanelTitle>コメント</PanelTitle>
                <PanelBtn plus />
                <PanelGrip />
              </PanelBar>
              <NavBar>
                <OrbitIco /><Caret $ml={10} />
                <FilmIco />
                <LucideHand size={30} color="#444" fill="#fff" strokeWidth={1.3} />
                <ZoomIco /><FitIco /><Caret $ml={11} />
                <MonitorIco /><Caret $ml={5} />
                <GridDispIco /><Caret $ml={6} />
                <ViewsIco /><Caret $ml={6} />
              </NavBar>
            </Footer>
          </Overlay>
        </Viewport>
        <Timeline>
          <Transport><First /><Prev /><Play /><Next /><Last /></Transport>
          <Strip>
            <Features>
              <BodyIco /><TlSketch /><TlExtrude /><TlMirror /><TlMove /><TlExtrude />
            </Features>
            <Bracket width="241" height="14" viewBox="0 0 241 14">
              <path d="M2 0V12H239V0M47 0V12M95 0V12M143 0V12M191 0V12" fill="none" stroke="#cacaca" strokeWidth="3.4" />
            </Bracket>
            <Marker width="24" height="66" viewBox="0 0 24 66">
              <path d="M0 0H24V10L14 20V64H10V20L0 10Z" fill="#666" />
            </Marker>
          </Strip>
          <GearSlot><FaCog size={32} /></GearSlot>
        </Timeline>
      </Win>
    </>
  );
}
